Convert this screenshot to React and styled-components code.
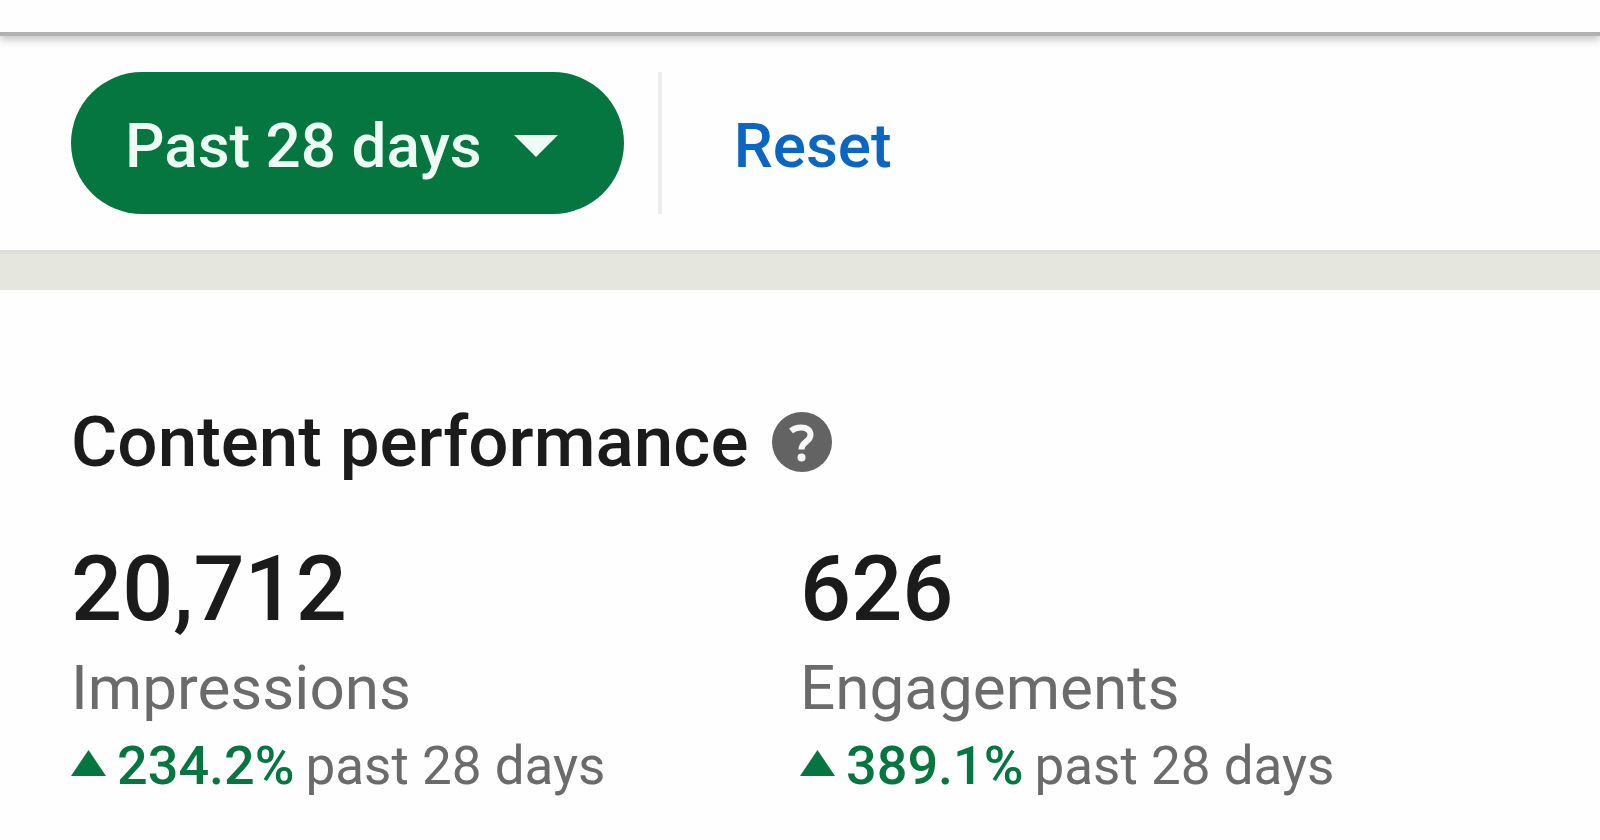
import React from 'react';
import styled, { createGlobalStyle } from 'styled-components';

const green = '#05763f';
const blue = '#0b66c2';
const ink = '#1b1b1b';
const gray = '#6b6b6b';

const GlobalStyle = createGlobalStyle`
  * {
    box-sizing: border-box;
  }
  body {
    margin: 0;
    background: #fefefe;
    color: ${ink};
    font-family: Roboto, sans-serif;
    overflow-x: hidden;
  }
`;

const TopBar = styled.header`
  height: 36px;
  background: #fefefe;
  border-bottom: 4px solid #b2b2b2;
  box-shadow: 0 4px 8px rgba(0, 0, 0, 0.22);
`;

const Toolbar = styled.div`
  display: flex;
  align-items: center;
  gap: 34px;
  padding: 36px 71px;
`;

const FilterButton = styled.button`
  display: flex;
  align-items: center;
  gap: 32px;
  height: 142px;
  padding: 6px 66px 0 54px;
  border: 0;
  border-radius: 71px;
  background: ${green};
  color: #eefbf4;
  font: 500 62px/74px Roboto, sans-serif;
`;

const Divider = styled.div`
  align-self: stretch;
  width: 4px;
  background: #ececec;
`;

const ResetButton = styled.button`
  padding: 6px 38px 0;
  border: 0;
  background: none;
  color: ${blue};
  font: 500 62px/74px Roboto, sans-serif;
`;

const Band = styled.div`
  height: 40px;
  border-top: 4px solid #dddddc;
  background: #e5e7de;
`;

const Panel = styled.main`
  padding: 106px 71px 24px;
`;

const Heading = styled.div`
  display: flex;
  align-items: center;
  gap: 24px;
`;

const Title = styled.h1`
  margin: 0;
  font-size: 71px;
  font-weight: 500;
  line-height: 92px;
`;

const HelpButton = styled.button`
  display: flex;
  padding: 0;
  border: 0;
  background: none;
`;

const Stats = styled.div`
  display: grid;
  grid-template-columns: 1fr 1fr;
  margin-top: 50px;
`;

const Value = styled.div`
  font-size: 90px;
  font-weight: 500;
  line-height: 104px;
`;

const Label = styled.div`
  color: ${gray};
  font-size: 62px;
  line-height: 92px;
`;

const Trend = styled.div`
  display: flex;
  align-items: center;
  gap: 11px;
  color: ${gray};
  font-size: 53px;
  line-height: 64px;
  white-space: nowrap;
`;

const UpArrow = styled.svg`
  margin-bottom: 6px;
`;

const Change = styled.span`
  color: ${green};
  font-size: 54px;
  font-weight: 500;
`;

const stats = [
  { value: '20,712', label: 'Impressions', change: '234.2%' },
  { value: '626', label: 'Engagements', change: '389.1%' },
];

const Stat = ({ value, label, change }) => (
  <div>
    <Value>{value}</Value>
    <Label>{label}</Label>
    <Trend>
      <UpArrow width="35" height="26" viewBox="0 0 35 26" aria-hidden="true">
        <path d="M17.5 0L35 26H0z" fill={green} />
      </UpArrow>
      <Change>{change}</Change>
      <span>past 28 days</span>
    </Trend>
  </div>
);

const App = () => {
  return (
    <>
      <GlobalStyle />
      <TopBar />
      <Toolbar>
        <FilterButton type="button">
          Past 28 days
          <svg width="44" height="22" viewBox="0 0 44 22" aria-hidden="true">
            <path d="M0 0h44L22 22z" fill="#eefbf4" />
          </svg>
        </FilterButton>
        <Divider />
        <ResetButton type="button">Reset</ResetButton>
      </Toolbar>
      <Band />
      <Panel>
        <Heading>
          <Title>Content performance</Title>
          <HelpButton type="button" aria-label="About content performance">
            <svg width="60" height="60" viewBox="0 0 60 60" aria-hidden="true">
              <circle cx="30" cy="30" r="30" fill="#636363" />
              <path
                d="M19 19C22 16.5 25 15.500 29 15.500c6 0 9.500 2.500 9.500 7.500 0 7-9 6.500-9 14.500"
                fill="none"
                stroke="#f6f6f6"
                strokeWidth="6"
              />
              <circle cx="29.500" cy="45.500" r="4" fill="#f6f6f6" />
            </svg>
          </HelpButton>
        </Heading>
        <Stats>
          {stats.map(stat => (
            <Stat key={stat.label} {...stat} />
          ))}
        </Stats>
      </Panel>
    </>
  );
};

export default App;
